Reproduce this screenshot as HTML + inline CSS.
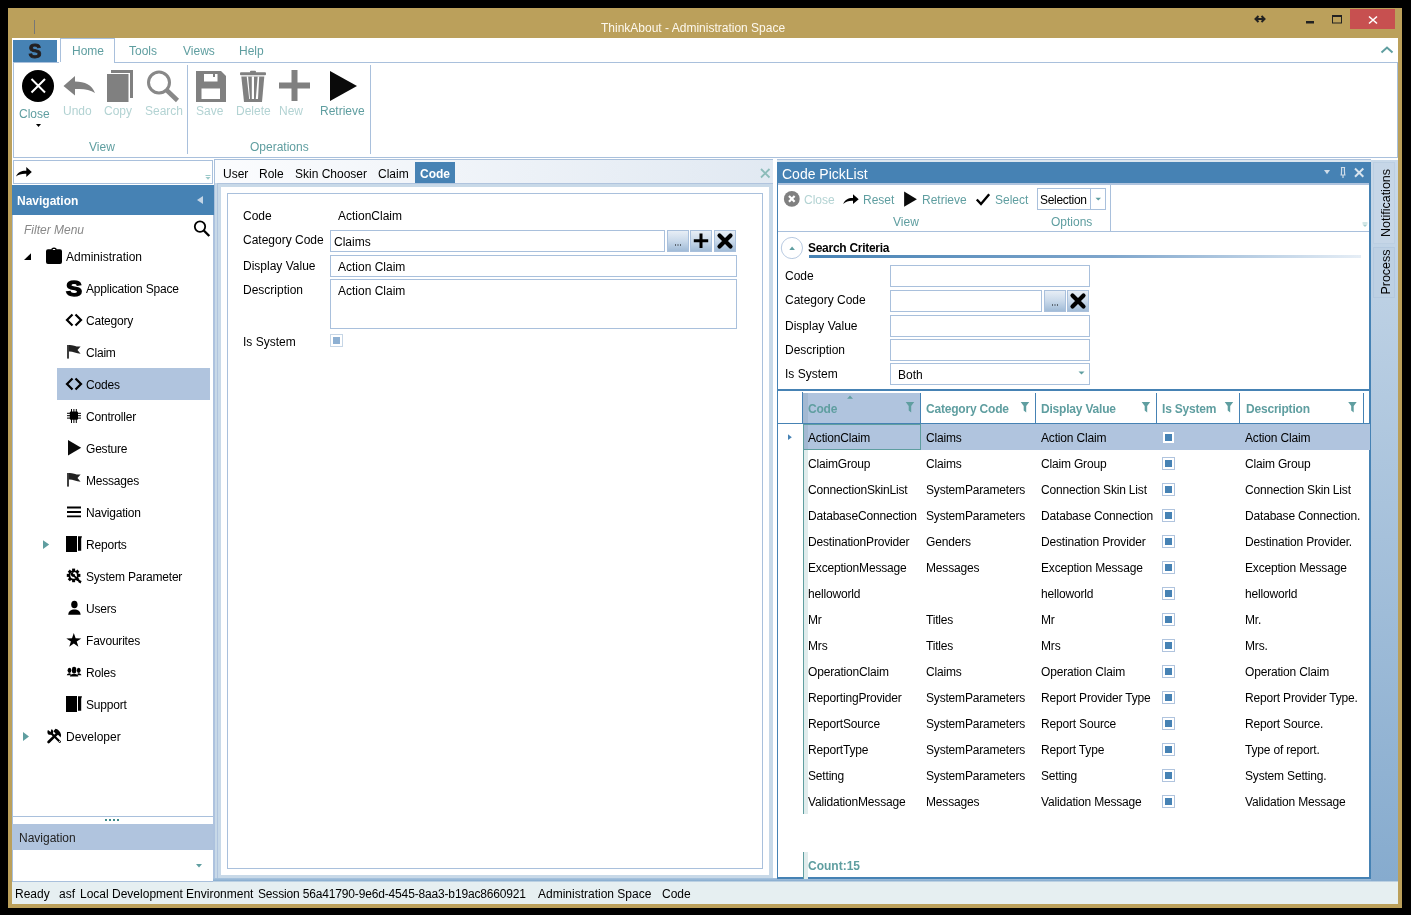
<!DOCTYPE html>
<html><head><meta charset="utf-8">
<style>
*{box-sizing:border-box;margin:0;padding:0}
html,body{width:1411px;height:915px;overflow:hidden;background:#000;font-family:"Liberation Sans",sans-serif;font-size:12px;color:#000}
.a{position:absolute}
.t{position:absolute;font-size:12px;line-height:14px;white-space:nowrap;will-change:transform}
.b{font-weight:bold}
.teal{color:#5f9ea0}
.dis{color:#b3d3d3}
svg{position:absolute;overflow:visible}
</style></head><body>
<!-- window frame -->
<div class="a" style="left:8px;top:8px;width:1394px;height:900px;background:#bba05b"></div>
<div class="t" style="left:601px;top:21px;color:#fdf8ee">ThinkAbout - Administration Space</div>
<div class="a" style="left:34px;top:20px;width:1px;height:14px;background:#777"></div>

<!-- client -->
<div class="a" style="left:12px;top:38px;width:1386px;height:866px;background:#fff"></div>

<!-- ribbon tabs -->
<div class="a" style="left:13px;top:40px;width:44px;height:22px;background:#4682b4"></div>
<div class="a" style="left:60px;top:38px;width:55px;height:25px;background:#fff;border:1px solid #a9c0dc;border-bottom:none"></div>
<div class="t teal" style="left:72px;top:44px">Home</div>
<div class="t teal" style="left:129px;top:44px">Tools</div>
<div class="t teal" style="left:183px;top:44px">Views</div>
<div class="t teal" style="left:239px;top:44px">Help</div>
<!-- ribbon icons -->
<svg style="left:0;top:0" width="400" height="160">
<text x="35" y="58.3" font-family="Liberation Sans" font-weight="bold" font-size="19.5" fill="#231f20" stroke="#231f20" stroke-width="0.9" text-anchor="middle">S</text>
<circle cx="38" cy="86" r="16" fill="#000"/>
<path d="M31.5,79 L45,92.5 M45,79 L31.5,92.5" stroke="#fff" stroke-width="2" fill="none"/>
<path d="M36,124 L41,124 L38.5,127 Z" fill="#000"/>
<path d="M63.5,86 L75,76 L75,81.5 C85,81.5 92,85 95,93 C90,89.5 84,88.5 75,89 L75,95.5 Z" fill="#808080"/>
<path d="M111,70 H133 V98 H130 V73 H111 Z" fill="#808080"/>
<rect x="107" y="74" width="21.5" height="28" fill="#808080"/>
<circle cx="159" cy="82.5" r="10.5" fill="none" stroke="#888" stroke-width="3"/>
<path d="M166.5,90 L177.5,100.5" stroke="#888" stroke-width="4.5"/>
<path d="M196,71 H221 L226,76 V102 H196 Z" fill="#808080"/>
<rect x="201.5" y="88.5" width="18.5" height="10.5" fill="#fff"/>
<rect x="204" y="74" width="13.5" height="7.5" fill="#fff"/>
<rect x="213" y="73.5" width="2" height="3.5" fill="#808080"/>
<rect x="240" y="72.3" width="26" height="3" rx="1" fill="#808080"/>
<rect x="250" y="70.8" width="6" height="2.5" rx="1" fill="#808080"/>
<path d="M241.3,76.6 H264.3 L262,102 H244 Z" fill="#808080"/>
<path d="M246.7,76.6 H248.1 L250,99 H249.2 Z M251.8,76.6 H254 V99 H251.8 Z M257.7,76.6 H259.2 L258,99 H255.8 Z" fill="#fff"/>
<path d="M294.5,70 V101 M279,85.5 H310" stroke="#808080" stroke-width="6"/>
<path d="M330,71 L357,86 L330,101 Z" fill="#0a0a0a"/>
</svg>
<!-- ribbon body -->
<div class="a" style="left:13px;top:62px;width:1385px;height:96px;border:1px solid #a9c0dc"></div>
<div class="a" style="left:59px;top:62px;width:55px;height:1px;background:#fff"></div>
<div class="a" style="left:187px;top:65px;width:1px;height:89px;background:#a9c0dc"></div>
<div class="a" style="left:370px;top:65px;width:1px;height:89px;background:#a9c0dc"></div>
<div class="t teal" style="left:19px;top:107px">Close</div>
<div class="t dis" style="left:63px;top:104px">Undo</div>
<div class="t dis" style="left:104px;top:104px">Copy</div>
<div class="t dis" style="left:145px;top:104px">Search</div>
<div class="t teal" style="left:89px;top:140px">View</div>
<div class="t dis" style="left:196px;top:104px">Save</div>
<div class="t dis" style="left:236px;top:104px">Delete</div>
<div class="t dis" style="left:279px;top:104px">New</div>
<div class="t teal" style="left:320px;top:104px">Retrieve</div>
<div class="t teal" style="left:250px;top:140px">Operations</div>

<!-- left nav -->
<div class="a" style="left:13px;top:160px;width:200px;height:24px;border:1px solid #a9c0dc"></div>
<div class="a" style="left:12px;top:185px;width:202px;height:30px;background:#4682b4"></div>
<div class="t b" style="left:17px;top:194px;color:#fff">Navigation</div>
<div class="a" style="left:12px;top:215px;width:1px;height:666px;background:#a9c0dc"></div>
<div class="t" style="left:24px;top:223px;color:#888;font-style:italic">Filter Menu</div>
<div class="a" style="left:57px;top:368px;width:153px;height:32px;background:#b0c4de"></div>
<div class="t" style="left:66px;top:250px">Administration</div>
<div class="t" style="left:86px;top:282px;letter-spacing:-0.2px">Application Space</div>
<div class="t" style="left:86px;top:314px;letter-spacing:-0.2px">Category</div>
<div class="t" style="left:86px;top:346px;letter-spacing:-0.2px">Claim</div>
<div class="t" style="left:86px;top:378px;letter-spacing:-0.2px">Codes</div>
<div class="t" style="left:86px;top:410px;letter-spacing:-0.2px">Controller</div>
<div class="t" style="left:86px;top:442px;letter-spacing:-0.2px">Gesture</div>
<div class="t" style="left:86px;top:474px;letter-spacing:-0.2px">Messages</div>
<div class="t" style="left:86px;top:506px;letter-spacing:-0.2px">Navigation</div>
<div class="t" style="left:86px;top:538px;letter-spacing:-0.2px">Reports</div>
<div class="t" style="left:86px;top:570px;letter-spacing:-0.2px">System Parameter</div>
<div class="t" style="left:86px;top:602px;letter-spacing:-0.2px">Users</div>
<div class="t" style="left:86px;top:634px;letter-spacing:-0.2px">Favourites</div>
<div class="t" style="left:86px;top:666px;letter-spacing:-0.2px">Roles</div>
<div class="t" style="left:86px;top:698px;letter-spacing:-0.2px">Support</div>
<div class="t" style="left:66px;top:730px">Developer</div>
<div class="a" style="left:12px;top:816px;width:201px;height:1px;background:#a9c0dc"></div>
<div class="a" style="left:12px;top:824px;width:201px;height:26px;background:#b0c4de"></div>
<div class="t" style="left:19px;top:831px;color:#222">Navigation</div>
<div class="a" style="left:12px;top:881px;width:201px;height:1px;background:#a9c0dc"></div>

<!-- nav icons -->
<svg style="left:0;top:0" width="230" height="760">
<path d="M16,176.5 C18,172 22,170.5 26.3,170.8 V167 L31.8,172 L26.3,177 V173.8 C22,173.6 18.5,174.5 16,176.5 Z" fill="#000"/>
<rect x="205.5" y="175" width="5" height="1" fill="#9cc9c9"/>
<path d="M205.5,177 H210.5 L208,179.8 Z" fill="#9cc9c9"/>
<path d="M203,196 V204 L197,200 Z" fill="#c3d5e6"/>
<circle cx="200" cy="226.6" r="5.2" fill="none" stroke="#000" stroke-width="1.8"/>
<path d="M203.8,230.5 L209.3,236" stroke="#000" stroke-width="2.4"/>
<path d="M31,253.2 V260 H24 Z" fill="#000"/>
<path d="M48,249.2 H51.5 V248.5 Q54,246.5 56.5,248.5 V249.2 H60 Q62,249.2 62,251.2 V262 Q62,264 60,264 H48 Q46,264 46,262 V251.2 Q46,249.2 48,249.2 Z" fill="#000"/>
<rect x="52.8" y="249" width="2.4" height="1" fill="#fff"/>
<text x="74" y="296" font-family="Liberation Sans" font-weight="bold" font-size="21.5" text-anchor="middle" stroke="#000" stroke-width="1.4" fill="#000" transform="translate(74,0) scale(1.12,1) translate(-74,0)">S</text>
<path d="M72.5,314.5 L67,320 L72.5,325.5 M75.5,314.5 L81,320 L75.5,325.5" fill="none" stroke="#000" stroke-width="2.2"/>
<rect x="67.2" y="345" width="1.6" height="13.6" fill="#111"/><path d="M68.8,345 C72,344.5 76,347 80.6,346.5 L77.5,350 L80.6,353.7 C76,353.5 72,351 68.8,351.5 Z" fill="#222"/>
<path d="M72.5,378.5 L67,384 L72.5,389.5 M75.5,378.5 L81,384 L75.5,389.5" fill="none" stroke="#000" stroke-width="2.2"/>
<rect x="69.8" y="411.6" width="8.2" height="8.2" rx="1" fill="#000"/>
<path d="M71.5,409 V423 M73.9,409 V423 M76.3,409 V423 M67,413.3 H81 M67,415.7 H81 M67,418.1 H81" stroke="#000" stroke-width="1" />
<path d="M68,440 L81.2,447.8 L68,455.5 Z" fill="#0a0a0a"/>
<rect x="67.2" y="473" width="1.6" height="13.6" fill="#111"/><path d="M68.8,473 C72,472.5 76,475 80.6,474.5 L77.5,478 L80.6,481.7 C76,481.5 72,479 68.8,479.5 Z" fill="#222"/>
<path d="M67,507.5 H81 M67,512 H81 M67,516.3 H81" stroke="#000" stroke-width="1.8"/>
<path d="M43,540.2 L49.2,544.6 L43,549.1 Z" fill="#5f9ea0"/>
<path d="M66,536 H77 V552 H66 Z" fill="#000"/><path d="M78,536.3 H82 L81.2,538.8 V550.7 H78 Z" fill="#000"/>
<g transform="translate(73.6,575.4)">
<circle r="5.2" fill="#000"/><rect x="-1.5" y="-6.8" width="3" height="3" transform="rotate(0)" fill="#000"/><rect x="-1.5" y="-6.8" width="3" height="3" transform="rotate(45)" fill="#000"/><rect x="-1.5" y="-6.8" width="3" height="3" transform="rotate(90)" fill="#000"/><rect x="-1.5" y="-6.8" width="3" height="3" transform="rotate(135)" fill="#000"/><rect x="-1.5" y="-6.8" width="3" height="3" transform="rotate(180)" fill="#000"/><rect x="-1.5" y="-6.8" width="3" height="3" transform="rotate(225)" fill="#000"/><rect x="-1.5" y="-6.8" width="3" height="3" transform="rotate(270)" fill="#000"/><rect x="-1.5" y="-6.8" width="3" height="3" transform="rotate(315)" fill="#000"/>
<circle r="3.3" fill="#fff"/>
<path d="M-1,-1 L6.5,6.5" stroke="#000" stroke-width="1.7"/>
<path d="M-2.8,-0.3 C-3.2,-2.8 -1.5,-3.6 0.2,-3.2 L-0.8,-1.5 L0.2,-0.6 L1.4,-1.5 C1.8,0.4 0.6,1.9 -1.6,1.2 Z" fill="#000"/>
<path d="M5.5,4.5 L8,5.5 L7,8 L4.5,6.5 Z" fill="#000"/>
</g>
<ellipse cx="74.4" cy="604.5" rx="3.2" ry="3.8" fill="#000"/>
<path d="M68.2,614.7 C68.5,611 71,609.5 74.4,609.5 C78,609.5 80.3,611 80.6,614.7 Z" fill="#000"/>
<path d="M73.8,633 L75.6,638.3 L81.3,638.4 L76.7,641.6 L78.4,646.8 L73.8,643.6 L69.2,646.8 L70.9,641.6 L66.3,638.4 L72,638.3 Z" fill="#000"/>
<ellipse cx="69.5" cy="670.3" rx="1.9" ry="2.6" fill="#000"/><ellipse cx="78.7" cy="670.3" rx="1.9" ry="2.6" fill="#000"/>
<path d="M66.8,675.3 C67,673.6 68.5,673.2 70.3,673.2 L71,675.3 Z M81.4,675.3 C81.2,673.6 79.7,673.2 77.9,673.2 L77.2,675.3 Z" fill="#000"/>
<rect x="72" y="666.8" width="4.2" height="6.6" rx="2" fill="#000"/>
<path d="M69.9,676.5 C70,674.6 72,673.8 74.1,673.8 C76.2,673.8 78.2,674.6 78.3,676.5 Z" fill="#000"/>
<path d="M66,696 H77 V712 H66 Z" fill="#000"/><path d="M78,696.3 H82 L81.2,698.8 V710.7 H78 Z" fill="#000"/>
<path d="M23,732.1 L29,736.6 L23,741.1 Z" fill="#5f9ea0"/>
<path d="M51.5,733.5 L59.8,741.8" stroke="#000" stroke-width="2.3" stroke-linecap="round"/>
<circle cx="50.3" cy="731.9" r="2.9" fill="#000"/>
<path d="M47,729.2 L50.6,732 L51.8,728 Z" fill="#fff"/>
<circle cx="59.4" cy="741.3" r="0.6" fill="#fff"/>
<path d="M48.6,742 L57.2,733.6" stroke="#000" stroke-width="2.7" stroke-linecap="round"/>
<path d="M53.3,731.3 L55.6,728.8 C58.4,729.6 60.6,731.8 61.1,735 L60.6,737.6 C59.6,735.6 58.2,734.6 56.8,734.4 Z" fill="#000"/>
</svg>
<svg style="left:0;top:0" width="230" height="900"><rect x="105" y="819" width="2" height="2" fill="#3f8a8a"/><rect x="109" y="819" width="2" height="2" fill="#3f8a8a"/><rect x="113" y="819" width="2" height="2" fill="#3f8a8a"/><rect x="117" y="819" width="2" height="2" fill="#3f8a8a"/><path d="M196,864 H202 L199,867.6 Z" fill="#5f9ea0"/></svg>
<!-- nav / middle splitter -->
<div class="a" style="left:214px;top:184px;width:1px;height:31px;background:#a9c0dc"></div><div class="a" style="left:213px;top:215px;width:2px;height:666px;background:#adc2de"></div>

<!-- middle panel -->
<div class="a" style="left:214px;top:159px;width:559px;height:25px;background:linear-gradient(90deg,#fbfcfe,#e1e9f2);border-top:1px solid #a9c0dc;border-left:1px solid #a9c0dc"></div>
<div class="a" style="left:415px;top:162px;width:40px;height:21px;background:#4682b4"></div>
<div class="t" style="left:223px;top:167px">User</div>
<div class="t" style="left:259px;top:167px">Role</div>
<div class="t" style="left:295px;top:167px">Skin Chooser</div>
<div class="t" style="left:378px;top:167px">Claim</div>
<div class="t b" style="left:420px;top:167px;color:#fff">Code</div>
<div class="a" style="left:215px;top:183px;width:558px;height:696px;background:#c8d9e8"></div>
<div class="a" style="left:217px;top:183px;width:1px;height:696px;background:#b0c4de"></div>
<div class="a" style="left:217px;top:183px;width:556px;height:1px;background:#b0c4de"></div>
<div class="a" style="left:221px;top:187px;width:548px;height:688px;background:#fff"></div>
<div class="a" style="left:213px;top:878px;width:1185px;height:4px;background:linear-gradient(#a9c4de,#8aaed0 70%,#dfe9ef)"></div>
<div class="a" style="left:227px;top:193px;width:536px;height:676px;border:1px solid #a9c0dc"></div>
<div class="t" style="left:243px;top:209px">Code</div>
<div class="t" style="left:338px;top:209px">ActionClaim</div>
<div class="t" style="left:243px;top:233px">Category Code</div>
<div class="a" style="left:330px;top:230px;width:335px;height:22px;border:1px solid #a9c0dc"></div>
<div class="t" style="left:334px;top:235px">Claims</div>
<div class="t" style="left:243px;top:259px">Display Value</div>
<div class="a" style="left:330px;top:255px;width:407px;height:22px;border:1px solid #a9c0dc"></div>
<div class="t" style="left:338px;top:260px">Action Claim</div>
<div class="t" style="left:243px;top:283px">Description</div>
<div class="a" style="left:330px;top:279px;width:407px;height:50px;border:1px solid #a9c0dc"></div>
<div class="t" style="left:338px;top:284px">Action Claim</div>
<div class="t" style="left:243px;top:335px">Is System</div>

<!-- middle extras -->
<svg style="left:0;top:0" width="800" height="400">
<path d="M761,169 L769.5,177.5 M769.5,169 L761,177.5" stroke="#8cbcb9" stroke-width="1.8"/>
<defs>
<linearGradient id="btn" x1="0" y1="0" x2="0" y2="1"><stop offset="0" stop-color="#e9eff6"/><stop offset="0.5" stop-color="#c9d9ea"/><stop offset="1" stop-color="#9fbad6"/></linearGradient>
</defs>
<rect x="667.5" y="230.5" width="21" height="21" fill="url(#btn)" stroke="#a9c0dc"/>
<rect x="690.5" y="230.5" width="21" height="21" fill="url(#btn)" stroke="#a9c0dc"/>
<rect x="714.5" y="230.5" width="21" height="21" fill="url(#btn)" stroke="#a9c0dc"/>
<rect x="675" y="244.5" width="1" height="1" fill="#000"/><rect x="677.5" y="244.5" width="1" height="1" fill="#000"/><rect x="680" y="244.5" width="1" height="1" fill="#000"/>
<path d="M701,233.5 V248 M693.8,240.8 H708.2" stroke="#000" stroke-width="3"/>
<path d="M719.5,235.5 L730.5,246.5 M730.5,235.5 L719.5,246.5" stroke="#000" stroke-width="4.2" stroke-linecap="round"/>
<rect x="330.5" y="334.5" width="12" height="12" fill="#fff" stroke="#c6d6e6"/>
<rect x="333" y="337" width="7" height="7" fill="#8eb0d2"/>
</svg>
<!-- picklist -->
<div class="a" style="left:777px;top:159px;width:594px;height:1px;background:#b0c4de"></div><div class="a" style="left:777px;top:160px;width:594px;height:2px;background:#dce6ef"></div>
<div class="a" style="left:777px;top:162px;width:594px;height:717px;border:2px solid #4682b4;border-top:none;border-right-width:2px;border-left-width:1px;background:#fff"></div>
<div class="a" style="left:777px;top:162px;width:594px;height:21px;background:#4682b4"></div>
<div class="a" style="left:778px;top:183px;width:591px;height:2px;background:#b0c4de"></div>
<div class="t" style="left:782px;top:166px;font-size:14px;line-height:16px;color:#fff">Code PickList</div>
<div class="a" style="left:778px;top:231px;width:591px;height:1px;background:#a9c0dc"></div>
<div class="a" style="left:1110px;top:185px;width:1px;height:46px;background:#a9c0dc"></div>
<div class="t dis" style="left:804px;top:193px">Close</div>
<div class="t teal" style="left:863px;top:193px">Reset</div>
<div class="t teal" style="left:922px;top:193px">Retrieve</div>
<div class="t teal" style="left:995px;top:193px">Select</div>
<div class="t teal" style="left:893px;top:215px">View</div>
<div class="t teal" style="left:1051px;top:215px">Options</div>
<div class="a" style="left:1037px;top:188px;width:69px;height:22px;border:1px solid #a9c0dc"></div>
<div class="a" style="left:1090px;top:189px;width:1px;height:20px;background:#a9c0dc"></div>
<div class="t" style="left:1040px;top:193px;letter-spacing:-0.3px">Selection</div>
<div class="t b" style="left:808px;top:241px;letter-spacing:-0.28px">Search Criteria</div>
<div class="a" style="left:809px;top:255px;width:552px;height:3px;background:linear-gradient(90deg,#4682b4,#7fa6cc 55%,#e6eef6)"></div>
<div class="t" style="left:785px;top:269px">Code</div>
<div class="t" style="left:785px;top:293px">Category Code</div>
<div class="t" style="left:785px;top:319px">Display Value</div>
<div class="t" style="left:785px;top:343px">Description</div>
<div class="t" style="left:785px;top:367px">Is System</div>
<div class="a" style="left:890px;top:265px;width:200px;height:22px;border:1px solid #a9c0dc"></div>
<div class="a" style="left:890px;top:290px;width:152px;height:22px;border:1px solid #a9c0dc"></div>
<div class="a" style="left:890px;top:315px;width:200px;height:22px;border:1px solid #a9c0dc"></div>
<div class="a" style="left:890px;top:339px;width:200px;height:22px;border:1px solid #a9c0dc"></div>
<div class="a" style="left:890px;top:363px;width:200px;height:22px;border:1px solid #a9c0dc"></div>
<div class="t" style="left:898px;top:368px">Both</div>
<!-- grid -->
<div class="a" style="left:778px;top:389px;width:592px;height:2px;background:#4682b4"></div>
<div class="a" style="left:803px;top:393px;width:117px;height:30px;background:#b0c4de"></div>
<div class="a" style="left:803px;top:393px;width:5px;height:30px;background:#a3b9d2"></div>
<div class="a" style="left:778px;top:423px;width:592px;height:1px;background:#4682b4"></div>
<div class="a" style="left:802px;top:392px;width:1px;height:31px;background:#4682b4"></div>
<div class="a" style="left:920px;top:393px;width:1px;height:30px;background:#4682b4"></div>
<div class="a" style="left:1035px;top:393px;width:1px;height:30px;background:#4682b4"></div>
<div class="a" style="left:1156px;top:393px;width:1px;height:30px;background:#4682b4"></div>
<div class="a" style="left:1239px;top:393px;width:1px;height:30px;background:#4682b4"></div>
<div class="a" style="left:1363px;top:393px;width:1px;height:30px;background:#4682b4"></div>
<div class="t b teal" style="left:808px;top:402px;letter-spacing:-0.2px">Code</div>
<div class="t b teal" style="left:926px;top:402px;letter-spacing:-0.2px">Category Code</div>
<div class="t b teal" style="left:1041px;top:402px;letter-spacing:-0.2px">Display Value</div>
<div class="t b teal" style="left:1162px;top:402px;letter-spacing:-0.2px">Is System</div>
<div class="t b teal" style="left:1246px;top:402px;letter-spacing:-0.2px">Description</div>
<div class="a" style="left:803px;top:424px;width:567px;height:26px;background:#b0c4de"></div>
<div class="a" style="left:803px;top:424px;width:118px;height:26px;border:1px solid #5f9ea0"></div>
<div class="a" style="left:803px;top:450px;width:5px;height:364px;background:#e0ecec"></div>
<div class="a" style="left:804px;top:425px;width:4px;height:24px;background:#a3b9d2"></div>
<div class="a" style="left:803px;top:424px;width:1px;height:390px;background:#5f9ea0"></div>
<div class="a" style="left:803px;top:852px;width:1px;height:27px;background:#5f9ea0"></div>
<div class="a" style="left:804px;top:852px;width:4px;height:27px;background:#e0ecec"></div>
<div class="t" style="left:808px;top:431px;letter-spacing:-0.18px">ActionClaim</div><div class="t" style="left:926px;top:431px;letter-spacing:-0.18px">Claims</div><div class="t" style="left:1041px;top:431px;letter-spacing:-0.18px">Action Claim</div><div class="t" style="left:1245px;top:431px;letter-spacing:-0.18px">Action Claim</div><div class="t" style="left:808px;top:457px;letter-spacing:-0.18px">ClaimGroup</div><div class="t" style="left:926px;top:457px;letter-spacing:-0.18px">Claims</div><div class="t" style="left:1041px;top:457px;letter-spacing:-0.18px">Claim Group</div><div class="t" style="left:1245px;top:457px;letter-spacing:-0.18px">Claim Group</div><div class="t" style="left:808px;top:483px;letter-spacing:-0.18px">ConnectionSkinList</div><div class="t" style="left:926px;top:483px;letter-spacing:-0.18px">SystemParameters</div><div class="t" style="left:1041px;top:483px;letter-spacing:-0.18px">Connection Skin List</div><div class="t" style="left:1245px;top:483px;letter-spacing:-0.18px">Connection Skin List</div><div class="t" style="left:808px;top:509px;letter-spacing:-0.18px">DatabaseConnection</div><div class="t" style="left:926px;top:509px;letter-spacing:-0.18px">SystemParameters</div><div class="t" style="left:1041px;top:509px;letter-spacing:-0.18px">Database Connection</div><div class="t" style="left:1245px;top:509px;letter-spacing:-0.18px">Database Connection.</div><div class="t" style="left:808px;top:535px;letter-spacing:-0.18px">DestinationProvider</div><div class="t" style="left:926px;top:535px;letter-spacing:-0.18px">Genders</div><div class="t" style="left:1041px;top:535px;letter-spacing:-0.18px">Destination Provider</div><div class="t" style="left:1245px;top:535px;letter-spacing:-0.18px">Destination Provider.</div><div class="t" style="left:808px;top:561px;letter-spacing:-0.18px">ExceptionMessage</div><div class="t" style="left:926px;top:561px;letter-spacing:-0.18px">Messages</div><div class="t" style="left:1041px;top:561px;letter-spacing:-0.18px">Exception Message</div><div class="t" style="left:1245px;top:561px;letter-spacing:-0.18px">Exception Message</div><div class="t" style="left:808px;top:587px;letter-spacing:-0.18px">helloworld</div><div class="t" style="left:926px;top:587px;letter-spacing:-0.18px"></div><div class="t" style="left:1041px;top:587px;letter-spacing:-0.18px">helloworld</div><div class="t" style="left:1245px;top:587px;letter-spacing:-0.18px">helloworld</div><div class="t" style="left:808px;top:613px;letter-spacing:-0.18px">Mr</div><div class="t" style="left:926px;top:613px;letter-spacing:-0.18px">Titles</div><div class="t" style="left:1041px;top:613px;letter-spacing:-0.18px">Mr</div><div class="t" style="left:1245px;top:613px;letter-spacing:-0.18px">Mr.</div><div class="t" style="left:808px;top:639px;letter-spacing:-0.18px">Mrs</div><div class="t" style="left:926px;top:639px;letter-spacing:-0.18px">Titles</div><div class="t" style="left:1041px;top:639px;letter-spacing:-0.18px">Mrs</div><div class="t" style="left:1245px;top:639px;letter-spacing:-0.18px">Mrs.</div><div class="t" style="left:808px;top:665px;letter-spacing:-0.18px">OperationClaim</div><div class="t" style="left:926px;top:665px;letter-spacing:-0.18px">Claims</div><div class="t" style="left:1041px;top:665px;letter-spacing:-0.18px">Operation Claim</div><div class="t" style="left:1245px;top:665px;letter-spacing:-0.18px">Operation Claim</div><div class="t" style="left:808px;top:691px;letter-spacing:-0.18px">ReportingProvider</div><div class="t" style="left:926px;top:691px;letter-spacing:-0.18px">SystemParameters</div><div class="t" style="left:1041px;top:691px;letter-spacing:-0.18px">Report Provider Type</div><div class="t" style="left:1245px;top:691px;letter-spacing:-0.18px">Report Provider Type.</div><div class="t" style="left:808px;top:717px;letter-spacing:-0.18px">ReportSource</div><div class="t" style="left:926px;top:717px;letter-spacing:-0.18px">SystemParameters</div><div class="t" style="left:1041px;top:717px;letter-spacing:-0.18px">Report Source</div><div class="t" style="left:1245px;top:717px;letter-spacing:-0.18px">Report Source.</div><div class="t" style="left:808px;top:743px;letter-spacing:-0.18px">ReportType</div><div class="t" style="left:926px;top:743px;letter-spacing:-0.18px">SystemParameters</div><div class="t" style="left:1041px;top:743px;letter-spacing:-0.18px">Report Type</div><div class="t" style="left:1245px;top:743px;letter-spacing:-0.18px">Type of report.</div><div class="t" style="left:808px;top:769px;letter-spacing:-0.18px">Setting</div><div class="t" style="left:926px;top:769px;letter-spacing:-0.18px">SystemParameters</div><div class="t" style="left:1041px;top:769px;letter-spacing:-0.18px">Setting</div><div class="t" style="left:1245px;top:769px;letter-spacing:-0.18px">System Setting.</div><div class="t" style="left:808px;top:795px;letter-spacing:-0.18px">ValidationMessage</div><div class="t" style="left:926px;top:795px;letter-spacing:-0.18px">Messages</div><div class="t" style="left:1041px;top:795px;letter-spacing:-0.18px">Validation Message</div><div class="t" style="left:1245px;top:795px;letter-spacing:-0.18px">Validation Message</div>
<div class="t b teal" style="left:808px;top:859px">Count:15</div>
<svg style="left:0;top:0" width="1411" height="915">
<path d="M1324,170 H1330 L1327,174.3 Z" fill="#d0dde9"/>
<path d="M1340.5,175 H1345.5 M1343,175 V178 M1341.3,175 C1341.5,172 1341.8,169 1341.5,167.5 H1344.5 C1344.2,169 1344.5,172 1344.7,175" stroke="#d0dde9" stroke-width="1.2" fill="none"/>
<path d="M1355,168.5 L1363.3,176.8 M1363.3,168.5 L1355,176.8" stroke="#d8e4ee" stroke-width="2"/>
<circle cx="791.8" cy="198.9" r="7.9" fill="#808080"/>
<path d="M789,196 L794.6,201.8 M794.6,196 L789,201.8" stroke="#fff" stroke-width="2.2"/>
<path d="M843.2,204 C845,199.5 848.5,197.8 853,198 V194.3 L858.7,199.2 L853,204 V200.8 C849,200.6 846,201.5 843.2,204 Z" fill="#000"/>
<path d="M904.1,191.5 L916.9,199.15 L904.1,206.8 Z" fill="#0a0a0a"/>
<path d="M976.8,199.5 L981,204 L989.2,194.3" stroke="#000" stroke-width="2.4" fill="none"/>
<path d="M1095.5,197.7 H1101 L1098.25,200.6 Z" fill="#5f9ea0"/>
<circle cx="791.9" cy="248" r="10.6" fill="none" stroke="#b7c9e0" stroke-width="1"/>
<path d="M789.3,250.1 L792.1,246.6 L794.9,250.1 Z" fill="#5f9ea0"/>
<rect x="1044.5" y="290.5" width="21" height="21" fill="url(#btn)" stroke="#a9c0dc"/>
<rect x="1067.5" y="290.5" width="21" height="21" fill="url(#btn)" stroke="#a9c0dc"/>
<rect x="1052" y="304.5" width="1" height="1" fill="#000"/><rect x="1054.5" y="304.5" width="1" height="1" fill="#000"/><rect x="1057" y="304.5" width="1" height="1" fill="#000"/>
<path d="M1072.5,295.5 L1083.5,306.5 M1083.5,295.5 L1072.5,306.5" stroke="#000" stroke-width="4.2" stroke-linecap="round"/>
<path d="M1078.5,371.5 H1084.5 L1081.5,374.5 Z" fill="#5f9ea0"/>
<path d="M847.1,398.7 L850,395.4 L853,398.7 Z" fill="#5f9ea0"/>
<path d="M905.7,401.9 H914.2 L911.2,405.9 V412.4 L908.7,410.4 V405.9 Z" fill="#5f9ea0"/><path d="M1020.7,401.9 H1029.2 L1026.2,405.9 V412.4 L1023.7,410.4 V405.9 Z" fill="#5f9ea0"/><path d="M1141.7,401.9 H1150.2 L1147.2,405.9 V412.4 L1144.7,410.4 V405.9 Z" fill="#5f9ea0"/><path d="M1224.7,401.9 H1233.2 L1230.2,405.9 V412.4 L1227.7,410.4 V405.9 Z" fill="#5f9ea0"/><path d="M1348.2,401.9 H1356.7 L1353.7,405.9 V412.4 L1351.2,410.4 V405.9 Z" fill="#5f9ea0"/>
<path d="M788,434.3 L791.8,437.2 L788,440 Z" fill="#4682b4"/>
<rect x="1163" y="432" width="11" height="11" fill="#fff"/><rect x="1165" y="434" width="7" height="7" fill="#4682b4"/><rect x="1162.5" y="457.5" width="12" height="12" fill="#fff" stroke="#b0c4de"/><rect x="1165" y="460" width="7" height="7" fill="#4682b4"/><rect x="1162.5" y="483.5" width="12" height="12" fill="#fff" stroke="#b0c4de"/><rect x="1165" y="486" width="7" height="7" fill="#4682b4"/><rect x="1162.5" y="509.5" width="12" height="12" fill="#fff" stroke="#b0c4de"/><rect x="1165" y="512" width="7" height="7" fill="#4682b4"/><rect x="1162.5" y="535.5" width="12" height="12" fill="#fff" stroke="#b0c4de"/><rect x="1165" y="538" width="7" height="7" fill="#4682b4"/><rect x="1162.5" y="561.5" width="12" height="12" fill="#fff" stroke="#b0c4de"/><rect x="1165" y="564" width="7" height="7" fill="#4682b4"/><rect x="1162.5" y="587.5" width="12" height="12" fill="#fff" stroke="#b0c4de"/><rect x="1165" y="590" width="7" height="7" fill="#4682b4"/><rect x="1162.5" y="613.5" width="12" height="12" fill="#fff" stroke="#b0c4de"/><rect x="1165" y="616" width="7" height="7" fill="#4682b4"/><rect x="1162.5" y="639.5" width="12" height="12" fill="#fff" stroke="#b0c4de"/><rect x="1165" y="642" width="7" height="7" fill="#4682b4"/><rect x="1162.5" y="665.5" width="12" height="12" fill="#fff" stroke="#b0c4de"/><rect x="1165" y="668" width="7" height="7" fill="#4682b4"/><rect x="1162.5" y="691.5" width="12" height="12" fill="#fff" stroke="#b0c4de"/><rect x="1165" y="694" width="7" height="7" fill="#4682b4"/><rect x="1162.5" y="717.5" width="12" height="12" fill="#fff" stroke="#b0c4de"/><rect x="1165" y="720" width="7" height="7" fill="#4682b4"/><rect x="1162.5" y="743.5" width="12" height="12" fill="#fff" stroke="#b0c4de"/><rect x="1165" y="746" width="7" height="7" fill="#4682b4"/><rect x="1162.5" y="769.5" width="12" height="12" fill="#fff" stroke="#b0c4de"/><rect x="1165" y="772" width="7" height="7" fill="#4682b4"/><rect x="1162.5" y="795.5" width="12" height="12" fill="#fff" stroke="#b0c4de"/><rect x="1165" y="798" width="7" height="7" fill="#4682b4"/>
</svg>
<!-- right strip -->
<div class="a" style="left:1371px;top:160px;width:27px;height:721px;background:linear-gradient(#c9d9e9,#86abce)"></div>
<div class="a" style="left:1373px;top:162px;width:22px;height:82px;background:#c6d6e7;border:1px solid #bccfe2"></div>
<div class="a" style="left:1373px;top:247px;width:22px;height:51px;background:#bdd0e3;border:1px solid #b4c9df"></div>
<div class="t" style="left:1351px;top:196px;width:70px;height:14px;text-align:center;font-size:12.5px;transform:rotate(-90deg)">Notifications</div>
<div class="t" style="left:1361px;top:265px;width:50px;height:14px;text-align:center;font-size:12.5px;transform:rotate(-90deg)">Process</div>
<svg style="left:0;top:0" width="1411" height="300"><rect x="1362.5" y="222.5" width="5" height="1" fill="#a8cfcf"/><path d="M1362.5,224.5 H1367.5 L1365,227 Z" fill="#a8cfcf"/></svg>

<!-- status bar -->
<div class="a" style="left:12px;top:882px;width:1386px;height:22px;background:#e6eff1"></div>
<div class="t" style="left:15px;top:887px">Ready</div>
<div class="t" style="left:59px;top:887px">asf</div>
<div class="t" style="left:80px;top:887px">Local Development Environment</div>
<div class="t" style="left:258px;top:887px;letter-spacing:-0.16px">Session 56a41790-9e6d-4545-8aa3-b19ac8660921</div>
<div class="t" style="left:538px;top:887px">Administration Space</div>
<div class="t" style="left:662px;top:887px">Code</div>
<!-- title buttons -->
<svg style="left:0;top:0" width="1411" height="60">
<g fill="none" stroke="#222" stroke-width="2">
<path d="M1256,19 H1264"/><path d="M1258.5,16 L1255.5,19 L1258.5,22" stroke-width="2"/><path d="M1261.5,16 L1264.5,19 L1261.5,22"/>
</g>
<rect x="1306" y="21" width="8" height="2.5" fill="#222"/>
<rect x="1332.5" y="15.5" width="9" height="7.5" fill="none" stroke="#222" stroke-width="1"/>
<rect x="1332" y="15" width="10" height="2" fill="#222"/>
<rect x="1350" y="9" width="45" height="20" fill="#c75050"/>
<path d="M1369,16.5 L1377,23.5 M1377,16.5 L1369,23.5" stroke="#fff" stroke-width="1.6" fill="none"/>
<path d="M1381.5,52.5 L1387,47.5 L1392.5,52.5" stroke="#5f9ea0" stroke-width="2" fill="none"/>
</svg>
</body></html>
